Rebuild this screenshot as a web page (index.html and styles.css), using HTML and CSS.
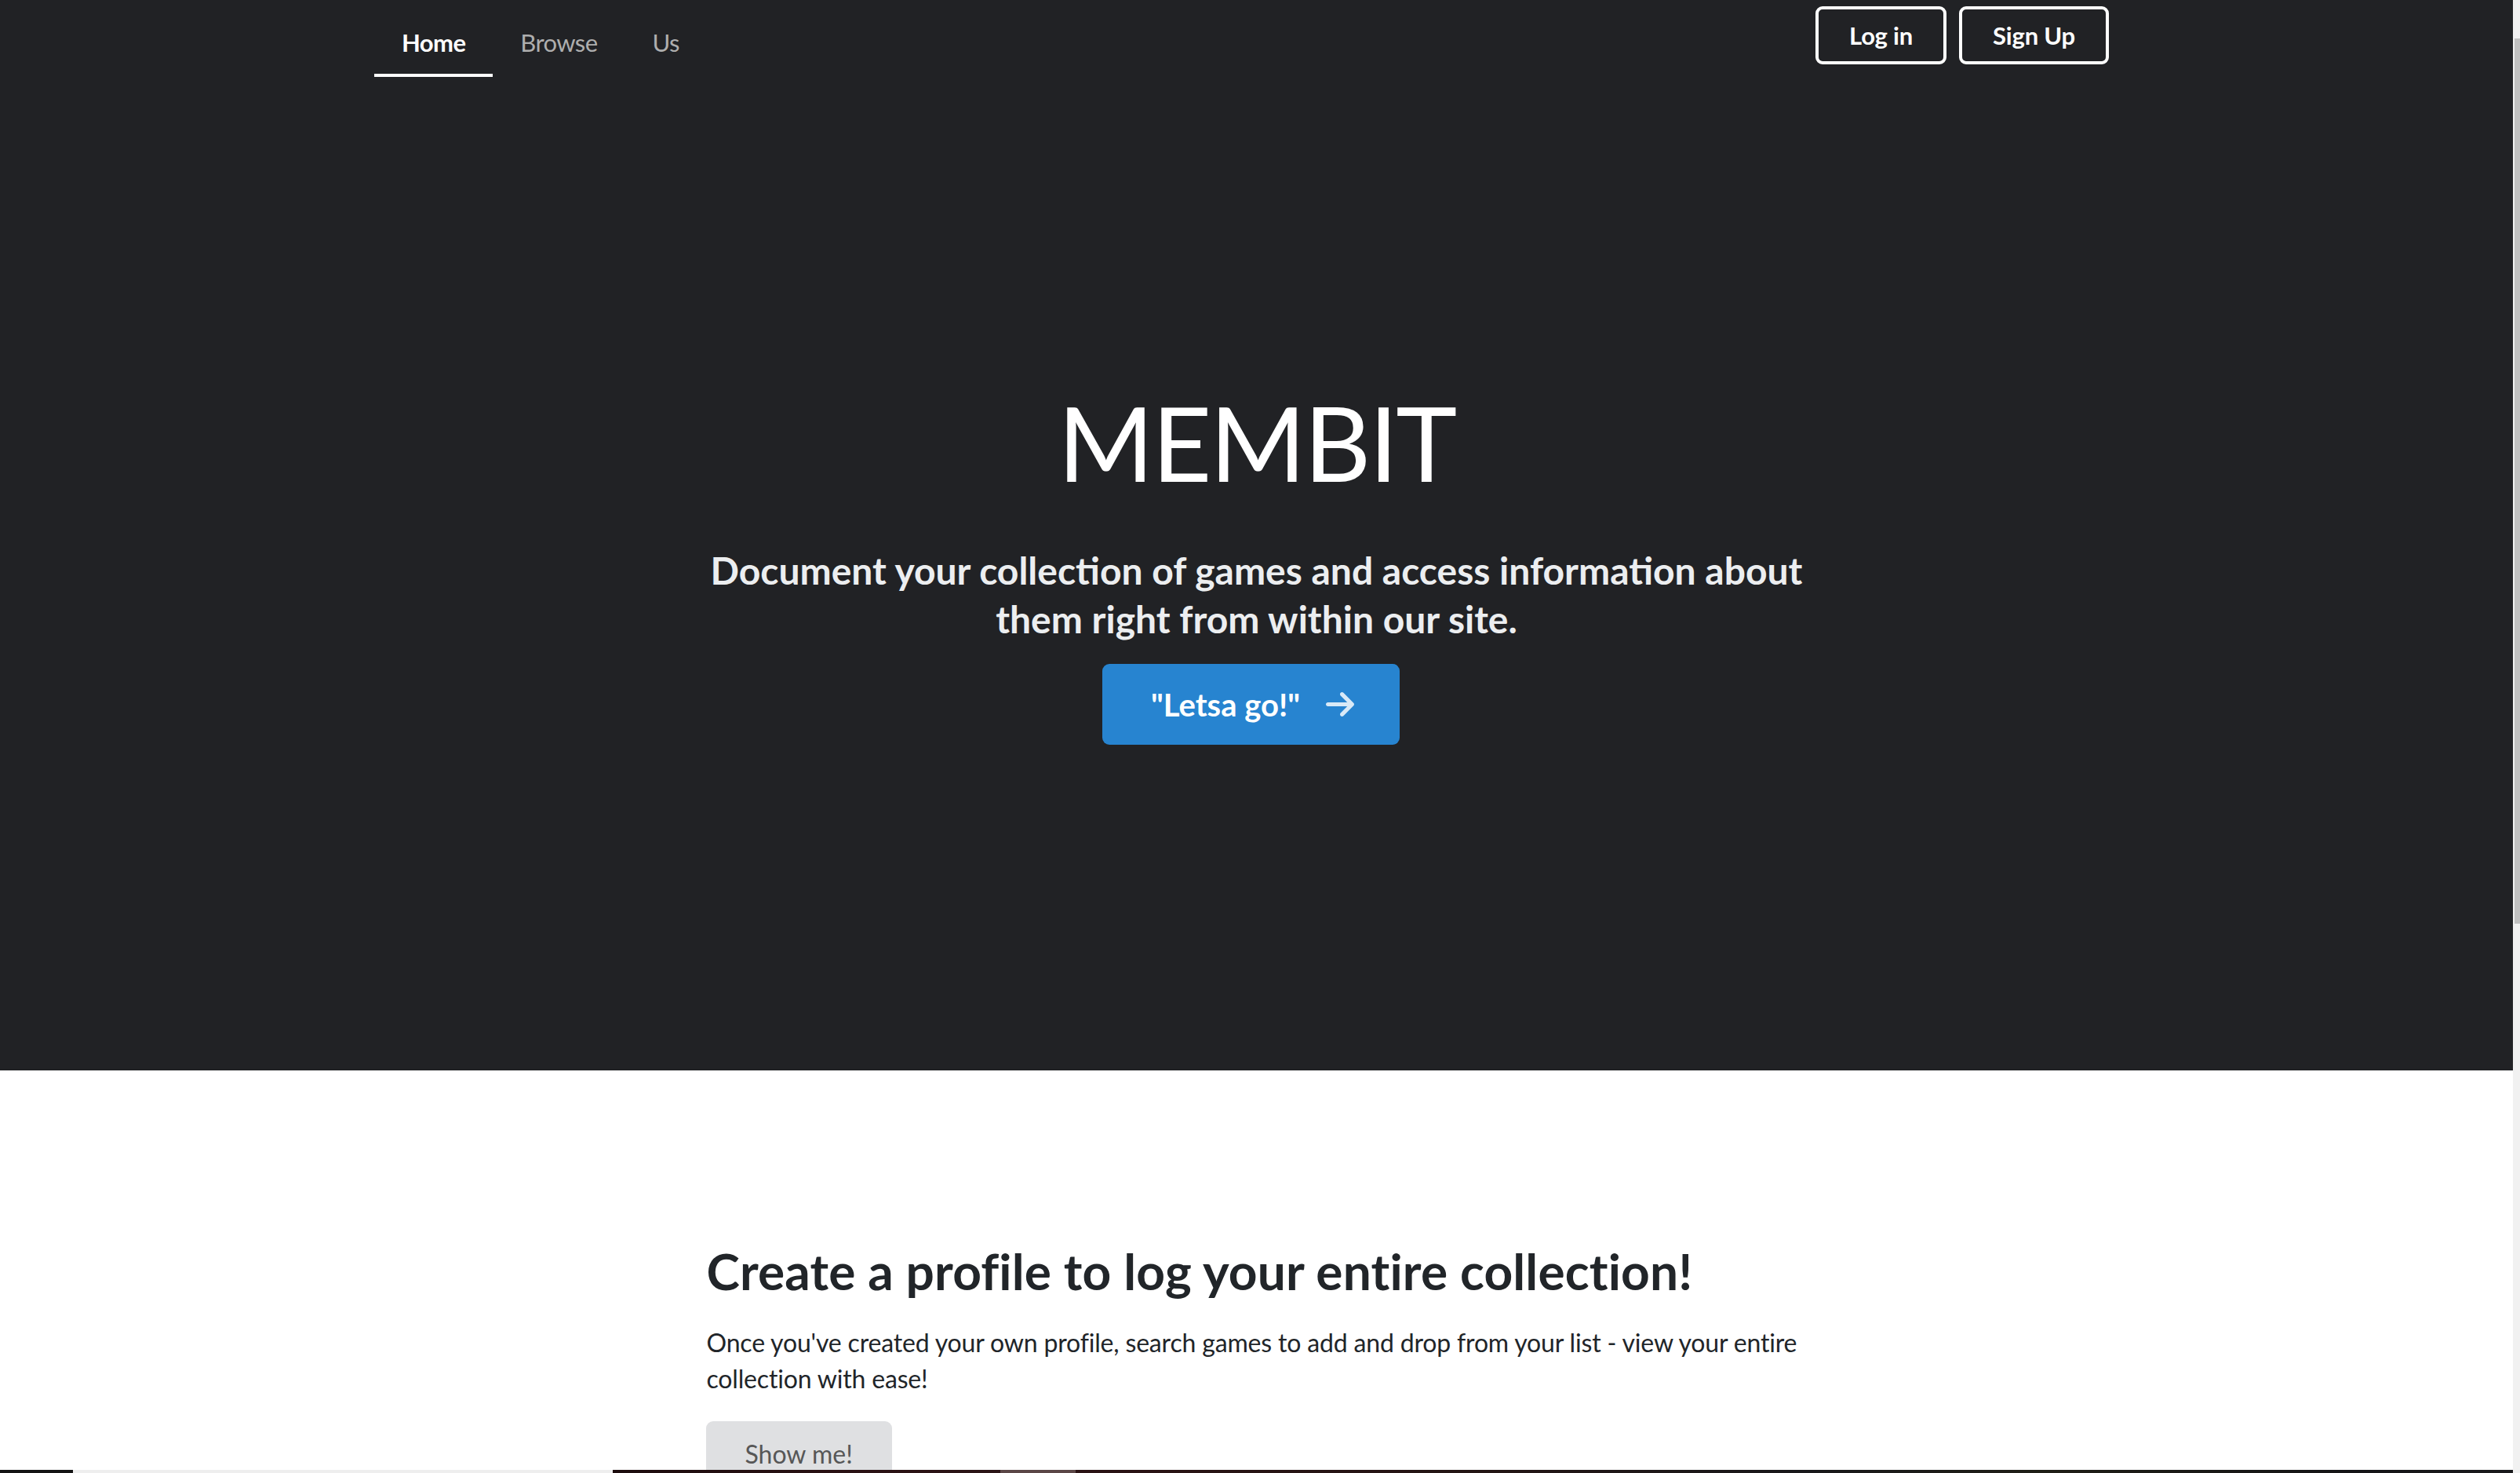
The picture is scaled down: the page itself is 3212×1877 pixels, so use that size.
FILE: index.html
```html
<!DOCTYPE html>
<html lang="en">
<head>
<meta charset="utf-8">
<title>MEMBIT</title>
<link rel="stylesheet" href="styles.css">
</head>
<body>
<header class="hero">
  <nav class="topbar">
    <ul class="nav-links">
      <li><a class="nav-link active" href="#">Home</a></li>
      <li><a class="nav-link" href="#">Browse</a></li>
      <li><a class="nav-link" href="#">Us</a></li>
    </ul>
    <div class="nav-actions">
      <a class="btn-outline" href="#">Log in</a>
      <a class="btn-outline" href="#">Sign Up</a>
    </div>
  </nav>
  <div class="hero-body">
    <h1 class="hero-title">MEMBIT</h1>
    <p class="hero-lead">Document your collection of games and access information about them right from within our site.</p>
    <a class="btn-primary" href="#">"Letsa go!"
      <svg class="arrow" viewBox="0 64 448 384" width="36" height="31" aria-hidden="true"><path fill="currentColor" d="M438.6 278.6c12.5-12.5 12.5-32.8 0-45.3l-160-160c-12.5-12.5-32.8-12.5-45.3 0s-12.5 32.8 0 45.3L338.8 224 32 224c-17.7 0-32 14.3-32 32s14.3 32 32 32l306.7 0L233.4 393.4c-12.5 12.5-12.5 32.8 0 45.3s32.8 12.5 45.3 0l160-160z"/></svg>
    </a>
  </div>
</header>
<section class="feature">
  <div class="feature-inner">
    <h2 class="feature-title">Create a profile to log your entire collection!</h2>
    <p class="feature-text">Once you've created your own profile, search games to add and drop from your list - view your entire collection with ease!</p>
    <a class="btn-light" href="#">Show me!</a>
  </div>
</section>
<section class="showcase" aria-label="Game showcase"></section>
<div class="scrollbar" aria-hidden="true"><div class="scrollbar-thumb"></div></div>
</body>
</html>
```
FILE: styles.css
```css
html {
  background: #fff;
}
body {
  margin: 0 9px 0 0;
  font-family: Lato, "Open Sans", "Liberation Sans", sans-serif;
  color: #212529;
}
a {
  text-decoration: none;
}
.scrollbar {
  position: fixed;
  top: 0;
  right: 0;
  width: 9px;
  height: 100vh;
  background: #f1f1f1;
}
.scrollbar-thumb {
  position: absolute;
  top: 49px;
  left: 2px;
  right: 0;
  height: 1128px;
  background: #c1c1c1;
}
.hero {
  background: #212225;
  height: 1364px;
  display: flex;
  flex-direction: column;
}
.topbar {
  max-width: 2249px;
  width: 100%;
  margin: 0 auto;
  padding-right: 38px;
  box-sizing: border-box;
  display: flex;
  justify-content: space-between;
  align-items: flex-start;
}
.nav-links {
  list-style: none;
  margin: 0;
  padding: 0;
  display: flex;
}
.nav-link {
  display: block;
  padding: 30px 35px 16px;
  font-size: 31px;
  letter-spacing: -0.6px;
  line-height: 48px;
  color: #aeaeae;
  border-bottom: 4px solid transparent;
}
.nav-link.active {
  color: #fff;
  font-weight: 700;
  border-bottom-color: #fff;
}
.nav-actions {
  display: flex;
  gap: 16px;
  padding-top: 8px;
}
.btn-outline {
  display: flex;
  align-items: center;
  height: 74px;
  box-sizing: border-box;
  padding: 0 39px;
  border: 4px solid #fff;
  border-radius: 9px;
  color: #fff;
  font-weight: 700;
  font-size: 31px;
  letter-spacing: -0.2px;
}
.hero-body {
  display: flex;
  flex-direction: column;
  align-items: center;
  text-align: center;
  padding-top: 384px;
}
.hero-title {
  margin: 0;
  font-size: 132px;
  letter-spacing: -2.5px;
  line-height: 162px;
  font-weight: 400;
  color: #fff;
}
.hero-lead {
  margin: 52px 0 0;
  max-width: 1480px;
  font-size: 48px;
  line-height: 62px;
  font-weight: 700;
  color: #eceef0;
}
.btn-primary {
  margin: 26px 14px 0 0;
  display: inline-flex;
  align-items: center;
  gap: 33px;
  height: 103px;
  box-sizing: border-box;
  padding: 0 58px 0 62px;
  background: #2784d0;
  border-radius: 9px;
  color: #fff;
  font-size: 40px;
  font-weight: 700;
}
.arrow {
  color: rgba(255, 255, 255, 0.82);
}
.feature {
  height: 509px;
  overflow: hidden;
  background: #fff;
}
.feature-inner {
  width: 1438px;
  box-sizing: border-box;
  padding: 218px 0 0 18px;
  margin: 0 auto;
}
.feature-title {
  margin: 0;
  font-size: 64px;
  letter-spacing: 0.15px;
  line-height: 76px;
  font-weight: 700;
  color: #212529;
}
.feature-text {
  margin: 30px 0 0;
  font-size: 32px;
  letter-spacing: -0.17px;
  line-height: 46px;
  color: #212529;
}
.btn-light {
  display: inline-flex;
  align-items: center;
  margin: 31px 0 0 -1px;
  height: 82px;
  padding: 0 50px;
  box-sizing: border-box;
  background: #dfe0e2;
  border-radius: 9px;
  color: #575757;
  font-size: 32px;
}
.showcase {
  height: 1087px;
  background:
    linear-gradient(180deg, rgba(0,0,0,0) 0, rgba(0,0,0,0.4) 100%),
    linear-gradient(90deg, #141414 0, #141414 93px, #eeeeee 93px, #eeeeee 781px, #1c0c0d 781px, #2a1113 1100px, #2b1416 1275px, #5b4646 1275px, #5b4646 1371px, #2a1214 1371px, #231514 1900px, #18181a 2300px, #1f1e16 2600px, #141416 3000px, #1a1a1c 3203px);
}
```
